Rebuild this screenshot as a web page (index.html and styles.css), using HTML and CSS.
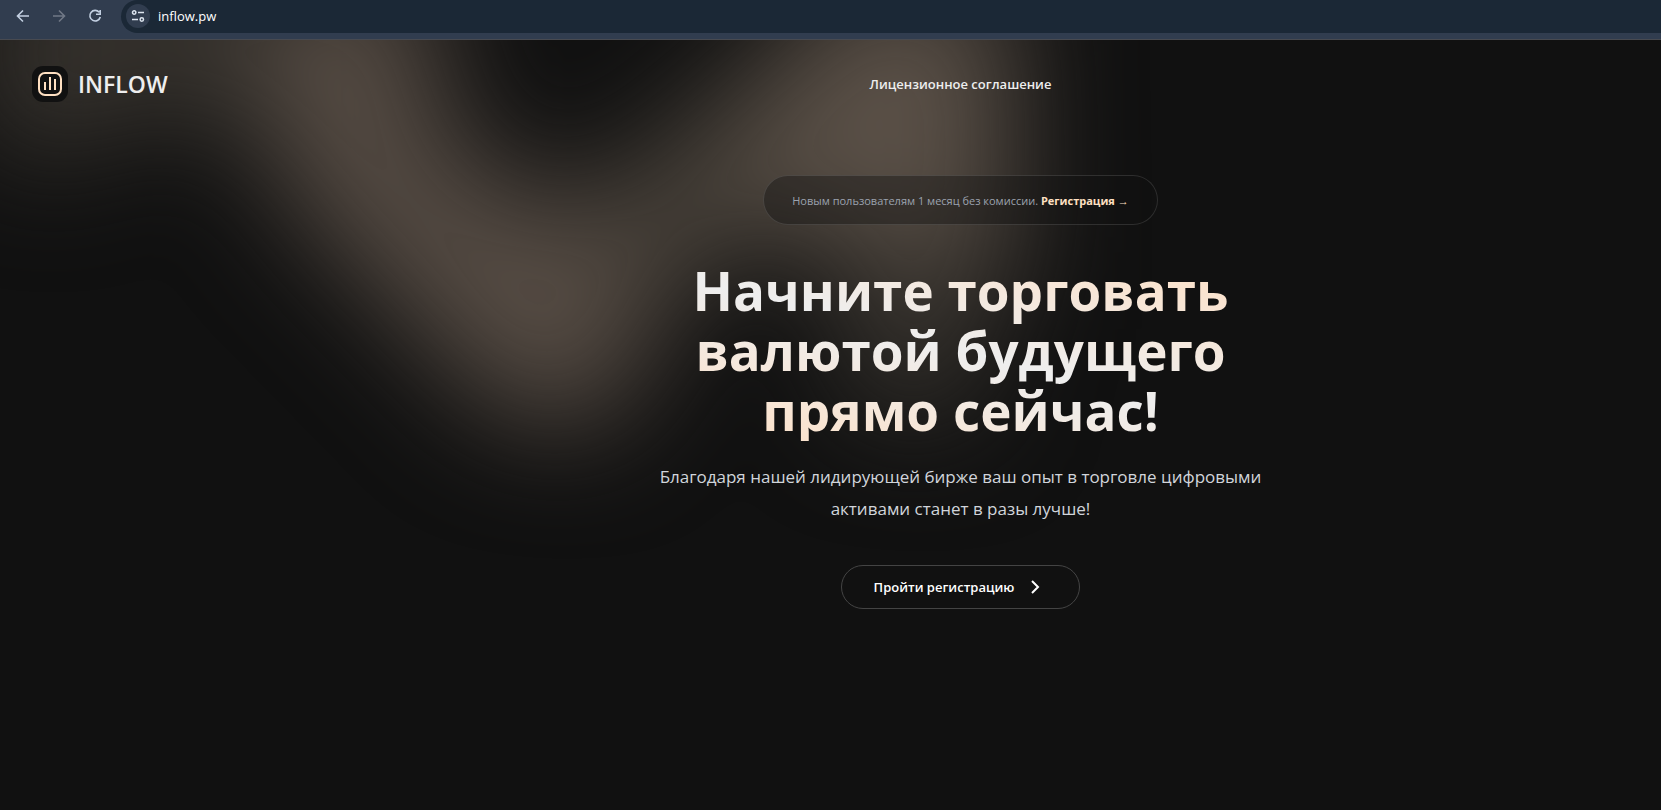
FILE: index.html
```
<!DOCTYPE html>
<html lang="ru">
<head>
  <meta charset="UTF-8" />
  <meta name="viewport" content="width=device-width, initial-scale=1.0"/>
  <title>INFLOW</title>
  <link rel="stylesheet" href="styles.css">
</head>
<body>

  <div class="browser-bar">
    <div class="browser-nav">
      <button type="button" aria-label="Назад">
        <svg width="14" height="14" viewBox="0 0 14 14"><path d="M13 7H2M7 1.5L1.5 7L7 12.5"/></svg>
      </button>
      <button type="button" aria-label="Вперёд" disabled>
        <svg width="14" height="14" viewBox="0 0 14 14"><path d="M1 7H12M7 1.5L12.5 7L7 12.5"/></svg>
      </button>
      <button type="button" aria-label="Обновить">
        <svg width="14" height="14" viewBox="0 0 14 14"><path d="M11.2 3.2A5.3 5.3 0 1 0 12.3 8M12.2 1V5.2H8"/></svg>
      </button>
    </div>
    <div class="address">
      <button class="site-info" type="button" aria-label="Сведения о сайте">
        <svg width="14" height="14" viewBox="0 0 14 14">
          <circle cx="3.2" cy="3.5" r="1.7"/>
          <path d="M7 3.5H13M1 10.5H7"/>
          <circle cx="10.8" cy="10.5" r="1.7"/>
        </svg>
      </button>
      <input type="text" class="url" value="inflow.pw" aria-label="Адрес" />
    </div>
  </div>

  <div class="page">
    <svg class="glow" width="1300" height="640" viewBox="0 0 1300 640" aria-hidden="true">
      <defs>
        <filter id="soft" x="-200" y="-200" width="1700" height="1100" filterUnits="userSpaceOnUse" color-interpolation-filters="sRGB">
          <feGaussianBlur stdDeviation="58"/>
        </filter>
      </defs>
      <g filter="url(#soft)">
        <path class="glow-dim" d="M-20 -80H280V100L130 70L60 130L-20 90Z"/>
        <path class="glow-side" d="M260 -70L430 -70L440 80L510 150L640 150L665 290L600 390L500 375L280 150Z"/>
        <path class="glow-bridge" d="M560 190L780 0L860 160L640 260Z"/>
        <path class="glow-band" d="M820 -60L1010 -60L1015 250L860 260L750 120Z"/>
        <path class="glow-dim" d="M840 200L990 200L970 380L850 370Z"/>
      </g>
    </svg>

    <header class="header">
      <a class="brand" href="#">
        <svg width="36" height="36" viewBox="0 0 36 36">
          <rect class="brand-bg" width="36" height="36" rx="11"/>
          <rect class="brand-line" x="7" y="7" width="22" height="22" rx="6"/>
          <path class="brand-line" d="M13 16V24M18 11V24M23 13V24"/>
        </svg>
        <span>INFLOW</span>
      </a>
      <nav class="nav">
        <a href="#">Лицензионное соглашение</a>
      </nav>
    </header>

    <main class="hero">
      <div class="promo">
        Новым пользователям 1 месяц без комиссии.
        <a href="#">Регистрация →</a>
      </div>
      <h1>Начните торговать<br>валютой будущего<br>прямо сейчас!</h1>
      <p class="lead">Благодаря нашей лидирующей бирже ваш опыт в торговле цифровыми<br>активами станет в разы лучше!</p>
      <button class="cta" type="button">
        <span>Пройти регистрацию</span>
        <svg width="10" height="16" viewBox="0 0 10 16"><path d="M2 2L8 8L2 14"/></svg>
      </button>
    </main>
  </div>

</body>
</html>
```
FILE: styles.css
```
* {
  box-sizing: border-box;
  margin: 0;
  padding: 0;
}

body {
  font-family: 'Open Sans', 'Noto Sans', sans-serif;
  background: #111111;
  color: #eeeeee;
  min-height: 100vh;
  display: flex;
  flex-direction: column;
  overflow-x: hidden;
}

button {
  background: none;
  border: none;
  color: inherit;
  font: inherit;
  cursor: pointer;
}

a {
  color: inherit;
  text-decoration: none;
}

svg {
  display: block;
  fill: none;
  stroke: currentColor;
}

/* Browser bar */

.browser-bar {
  display: flex;
  height: 40px;
  padding-left: 16px;
  gap: 19px;
  background: #313d4f;
  border-bottom: 1px solid #484a50;
}

.browser-nav {
  display: flex;
  gap: 22px;
  height: 32px;
  align-items: center;
  color: #c3d0e2;
}

.browser-nav button {
  width: 14px;
}

.browser-nav svg {
  stroke-width: 1.6;
}

.browser-nav button:disabled {
  color: #707886;
}

.address {
  flex: 1;
  display: flex;
  align-items: center;
  gap: 8px;
  height: 33px;
  padding: 0 0 1px 5px;
  background: #1b2836;
  border-radius: 17px 0 0 17px;
}

.site-info {
  display: flex;
  align-items: center;
  justify-content: center;
  width: 24px;
  height: 24px;
  border-radius: 50%;
  background: #313d4f;
  color: #dde5ef;
}

.site-info svg {
  stroke-width: 1.5;
}

.url {
  flex: 1;
  background: none;
  border: none;
  outline: none;
  color: #ffffff;
  font-family: 'Open Sans', sans-serif;
  font-size: 13px;
}

/* Page */

.page {
  position: relative;
  flex: 1;
  overflow: hidden;
}

.glow {
  position: absolute;
  top: 0;
  left: 0;
  stroke: none;
  pointer-events: none;
}

.glow-band {
  fill: #5a5047;
}

.glow-side {
  fill: #564c44;
}

.glow-bridge {
  fill: #4b443c;
}

.glow-dim {
  fill: #37332e;
}

.header {
  position: relative;
  display: grid;
  grid-template-columns: 260px 1fr;
  align-items: center;
  padding: 26px 0 0 32px;
  margin-right: 32px;
}

.brand {
  display: flex;
  align-items: center;
  gap: 10px;
  font-size: 23px;
  line-height: 36px;
  font-weight: 600;
}

.brand-bg {
  fill: #111111;
  stroke: none;
}

.brand-line {
  stroke: #ffe0c2;
  stroke-width: 2;
}

.nav {
  text-align: center;
  font-size: 13px;
  line-height: 24px;
  font-weight: 600;
}

.hero {
  position: relative;
  display: flex;
  flex-direction: column;
  align-items: center;
  padding: 73px 0 0 260px;
  text-align: center;
}

.promo {
  padding: 13px 28px 11px;
  border: 1px solid rgba(255, 255, 255, 0.12);
  border-radius: 25px;
  background: rgba(17, 17, 17, 0.4);
  color: #9ca3af;
  font-size: 11px;
  line-height: 24px;
}

.promo a {
  color: #ffe0c2;
  font-weight: 700;
}

h1 {
  width: 100%;
  max-width: 672px;
  margin-top: 36px;
  font-size: 53px;
  line-height: 60px;
  font-weight: 700;
  background: linear-gradient(to top right, #ffdfc2, #eeeeee, #ffdfc2);
  -webkit-background-clip: text;
  background-clip: text;
  color: transparent;
}

.lead {
  margin-top: 20px;
  color: #d1d5db;
  font-size: 17px;
  line-height: 32px;
}

.cta {
  display: flex;
  align-items: center;
  gap: 16px;
  margin-top: 40px;
  padding: 9px 39px 9px 32px;
  border: 1px solid #444444;
  border-radius: 22px;
  color: #ffffff;
  font-size: 13px;
  line-height: 24px;
  font-weight: 600;
}

.cta svg {
  stroke-width: 2;
}

@media (max-width: 1000px) {
  .header {
    grid-template-columns: 1fr auto;
  }

  .hero {
    padding-left: 0;
  }
}
```
